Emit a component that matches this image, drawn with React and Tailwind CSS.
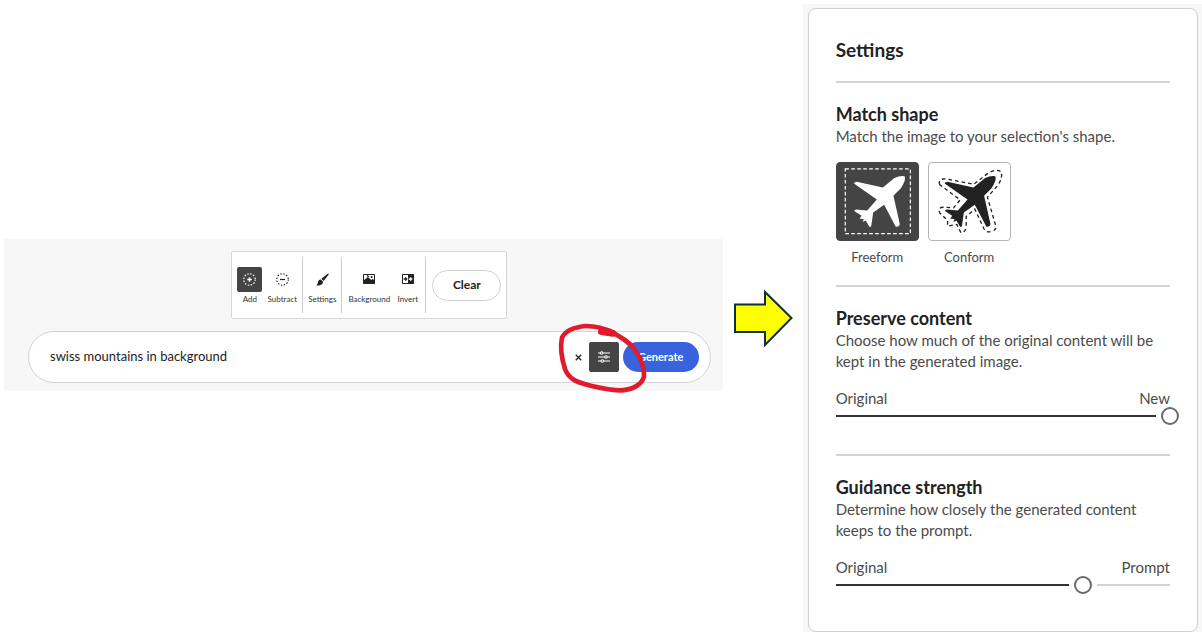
import React, { useState } from 'react';

const PLANE =
  'M88 101 Q90 95 100 96 L175 113 L210 84 Q228 76 241 79 Q245 92 230 114 L207 138 L226 222 Q226 232 214 231 L179 165 L146 188 L140 230 L135 232 L124 213 L114 216 L118 208 L105 207 L111 198 L90 184 Q88 179 96 179 L128 182 L157 149 Z';

const PLANE_OUTLINE =
  'M344 104 Q338 86 362 87 L447 103 L492 68 Q516 56 530 66 Q534 86 518 108 L488 142 L513 228 Q516 242 499 245 Q484 250 478 238 L450 178 L424 200 L424 230 Q422 248 408 249 L396 224 L368 229 L368 212 L345 190 Q338 176 352 172 L386 174 L406 150 Z';

function AddIcon() {
  return (
    <svg className="w-[13px] h-[13px]" viewBox="0 0 26 26" fill="none" stroke="currentColor">
      <circle cx="13" cy="13" r="11.5" strokeWidth="2.4" strokeDasharray="3 3.02" />
      <path d="M13 8.5v9M8.5 13h9" strokeWidth="2.8" />
    </svg>
  );
}

function SubtractIcon() {
  return (
    <svg className="w-[13px] h-[13px]" viewBox="0 0 26 26" fill="none" stroke="currentColor">
      <circle cx="13" cy="13" r="11.5" strokeWidth="2.2" strokeDasharray="3 3.02" />
      <path d="M8 13h10" strokeWidth="2.4" />
    </svg>
  );
}

function BrushIcon() {
  return (
    <svg className="w-[13px] h-[13px]" viewBox="0 0 39 39" fill="currentColor">
      <path d="M38 1.5 Q39 3 37 6 L23 24 L16 17.5 L34 3 Q37 .5 38 1.5Z" />
      <path d="M14.5 19.5 L21.5 26 Q21 34 12 37 Q6 38.5 1 37 Q5 34 5.5 29 Q7 20 14.5 19.5Z" />
    </svg>
  );
}

function BackgroundIcon() {
  return (
    <svg className="w-[12px] h-[12px]" viewBox="0 0 36 36">
      <rect x="0" y="3" width="36" height="30" rx="2" fill="#222" />
      <path d="M3 6h30v15l-4-4-4 4-10-9-12 9z" fill="#fff" />
      <circle cx="26" cy="12" r="3.2" fill="#222" />
      <path d="M12 6l7 4-3 3-5-3z" fill="#222" />
    </svg>
  );
}

function InvertIcon() {
  return (
    <svg className="w-[12px] h-[12px]" viewBox="0 0 36 36">
      <rect x="0" y="3" width="36" height="30" rx="2" fill="#222" />
      <path d="M3 6h15v24H3z" fill="#fff" />
      <path d="M5 18h11M11 13v10" stroke="#222" strokeWidth="4" />
      <path d="M20 18h11M26 13v10" stroke="#fff" strokeWidth="4" />
    </svg>
  );
}

function SlidersIcon() {
  return (
    <svg className="w-[12px] h-[12px]" viewBox="0 0 36 36" fill="none" stroke="#fff" strokeWidth="3.2">
      <path d="M0 6h7M15 6h21M0 18h20M28 18h8M0 30h9M17 30h19" />
      <circle cx="11" cy="6" r="3.9" />
      <circle cx="24" cy="18" r="3.9" />
      <circle cx="13" cy="30" r="3.9" />
    </svg>
  );
}

function ToolButton({ label, icon, active, className }) {
  return (
    <button type="button" className={`flex flex-col items-center ${className}`}>
      <span
        className={`flex h-[25px] w-[25px] items-center justify-center rounded-xs ${
          active ? 'bg-[#444] text-white' : 'text-[#222]'
        }`}
      >
        {icon}
      </span>
      <span className="mt-0.5 text-[8px] leading-[10px] text-[#333]">{label}</span>
    </button>
  );
}

function Toolbar() {
  return (
    <div className="flex h-[68px] rounded-xs border border-[#d8d8d8] bg-white p-[5px]">
      <div className="flex items-center gap-1 border-r border-[#ccc] pr-1">
        <ToolButton label="Add" icon={<AddIcon />} active className="w-[25px]" />
        <ToolButton label="Subtract" icon={<SubtractIcon />} className="w-8" />
      </div>
      <div className="flex items-center border-r border-[#ccc] px-1">
        <ToolButton label="Settings" icon={<BrushIcon />} className="w-[30px]" />
      </div>
      <div className="flex items-center gap-1.5 border-r border-[#ccc] px-1.5">
        <ToolButton label="Background" icon={<BackgroundIcon />} className="w-[42px]" />
        <ToolButton label="Invert" icon={<InvertIcon />} className="w-[23px]" />
      </div>
      <button
        type="button"
        className="ml-1.5 h-[31px] w-[69px] self-center rounded-full border border-[#d0d0d0] text-[12px] font-bold text-[#222]"
      >
        Clear
      </button>
    </div>
  );
}

function PromptBar() {
  const [prompt, setPrompt] = useState('swiss mountains in background');

  return (
    <form
      className="relative flex h-[52px] w-full items-center rounded-full border border-[#d4d4d4] bg-white pr-[11px] pl-[21px]"
      onSubmit={(e) => e.preventDefault()}
    >
      <input
        type="text"
        aria-label="Prompt"
        value={prompt}
        onChange={(e) => setPrompt(e.target.value)}
        className="min-w-0 flex-1 text-[13px] text-[#222] outline-none"
      />
      <button
        type="button"
        aria-label="Clear prompt"
        onClick={() => setPrompt('')}
        className="flex h-5 w-5 items-center justify-center"
      >
        <svg className="h-[7px] w-[7px]" viewBox="0 0 14 14" stroke="#222" strokeWidth="2.6">
          <path d="M1.5 1.5l11 11M12.5 1.5l-11 11" />
        </svg>
      </button>
      <button
        type="button"
        aria-label="Prompt settings"
        className="mr-1 flex h-[30px] w-[30px] items-center justify-center rounded-xs bg-[#444]"
      >
        <SlidersIcon />
      </button>
      <button
        type="submit"
        className="h-[30px] w-[76px] rounded-full bg-[#3863dd] text-[11px] font-bold text-white"
      >
        Generate
      </button>

      {/* hand-drawn marker circle */}
      <svg
        className="pointer-events-none absolute -top-[17px] -right-[10px] h-20 w-[175px]"
        viewBox="0 0 525 240"
        fill="none"
        stroke="#e01b2c"
        strokeLinecap="round"
        strokeLinejoin="round"
      >
        <path
          d="M206 53 C185 43 155 32 120 33 C85 37 60 50 51 68 C45 95 50 130 60 162 C72 195 100 203 140 213 C175 221 200 226 228 226 C262 224 290 210 297 185 C299 160 288 130 268 102 C250 78 225 65 196 48"
          strokeWidth="14"
        />
        <path d="M169 50 L204 55" strokeWidth="20" />
      </svg>
    </form>
  );
}

function ShapeOption({ label, value, selected, onChange, children }) {
  return (
    <label className="flex cursor-pointer flex-col items-center">
      <input
        type="radio"
        name="shape"
        value={value}
        checked={selected}
        onChange={() => onChange(value)}
        className="sr-only"
      />
      {children}
      <span className="mt-1.5 text-[13px] leading-5 text-[#4b4b4b]">{label}</span>
    </label>
  );
}

function SliderField({ label, left, right, initial }) {
  const [value, setValue] = useState(initial);

  return (
    <div className="mt-4">
      <div className="relative z-10 flex justify-between text-[15px] leading-5 text-[#4b4b4b]">
        <span>{left}</span>
        <span>{right}</span>
      </div>
      <div className="relative flex h-4 items-center">
        <div className="h-0.5 w-full bg-[#d4d4d4]">
          <div className="h-full bg-[#333]" style={{ width: `${value}%` }}></div>
        </div>
        <input
          type="range"
          min="0"
          max="100"
          aria-label={label}
          value={value}
          onChange={(e) => setValue(Number(e.target.value))}
          className="absolute -inset-x-[9px] h-4 appearance-none bg-transparent [&::-webkit-slider-thumb]:h-[18px] [&::-webkit-slider-thumb]:w-[18px] [&::-webkit-slider-thumb]:appearance-none [&::-webkit-slider-thumb]:rounded-full [&::-webkit-slider-thumb]:border-2 [&::-webkit-slider-thumb]:border-[#6a6a6a] [&::-webkit-slider-thumb]:bg-white [&::-webkit-slider-thumb]:shadow-[0_0_0_5px_#fff]"
        />
      </div>
    </div>
  );
}

function SectionText({ title, children }) {
  return (
    <>
      <h3 className="text-[18px] leading-6 font-bold text-[#222]">{title}</h3>
      <p className="text-[15px] leading-[21px] text-[#4b4b4b]">{children}</p>
    </>
  );
}

function SettingsPanel() {
  const [shape, setShape] = useState('freeform');
  const freeform = shape === 'freeform';
  const selectedTile = 'border-[#444] bg-[#444] text-white';
  const plainTile = 'border-[#b4b4b4] bg-white text-[#222]';

  return (
    <aside className="w-1/3 shrink-0 bg-[#f7f7f7] pt-1 pr-1 pl-[5px]">
      <div className="rounded-lg border border-[#d0d0d0] bg-white px-[27px] pt-[27px] pb-[38px]">
        <h2 className="text-[19px] leading-7 font-bold text-[#222]">Settings</h2>

        <hr className="mt-[17px] mb-[19px] border-t-2 border-[#d4d4d4]" />

        <section>
          <SectionText title="Match shape">Match the image to your selection's shape.</SectionText>
          <div className="mt-[15px] flex gap-[9px]">
            <ShapeOption label="Freeform" value="freeform" selected={freeform} onChange={setShape}>
              <span className={`h-[79px] w-[83px] overflow-hidden rounded-sm border ${freeform ? selectedTile : plainTile}`}>
                <svg className="h-full w-full" viewBox="37 40 244 230">
                  <rect x="62" y="57" width="196" height="195" fill="none" stroke="currentColor" strokeWidth="3.6" strokeDasharray="11 7" />
                  <path d={PLANE} fill="currentColor" />
                </svg>
              </span>
            </ShapeOption>
            <ShapeOption label="Conform" value="conform" selected={!freeform} onChange={setShape}>
              <span className={`h-[79px] w-[83px] overflow-hidden rounded-sm border ${freeform ? plainTile : selectedTile}`}>
                <svg className="h-full w-full" viewBox="312 40 244 230">
                  <path d={PLANE_OUTLINE} fill="none" stroke="currentColor" strokeWidth="4" strokeDasharray="11 9" />
                  <path d={PLANE} transform="translate(271 0)" fill="currentColor" />
                </svg>
              </span>
            </ShapeOption>
          </div>
        </section>

        <hr className="mt-[18px] mb-[19px] border-t-2 border-[#d4d4d4]" />

        <section>
          <SectionText title="Preserve content">
            Choose how much of the original content will be kept in the generated image.
          </SectionText>
          <SliderField label="Preserve content" left="Original" right="New" initial={100} />
        </section>

        <hr className="mt-[30px] mb-[19px] border-t-2 border-[#d4d4d4]" />

        <section>
          <SectionText title="Guidance strength">
            Determine how closely the generated content keeps to the prompt.
          </SectionText>
          <SliderField label="Guidance strength" left="Original" right="Prompt" initial={74} />
        </section>
      </div>
    </aside>
  );
}

export default function App() {
  return (
    <div className="flex min-h-screen items-center gap-2.5 bg-white pt-1 pb-1.5 pl-1 font-['Lato',sans-serif]">
      <main className="mb-1.5 flex flex-1 flex-col items-center gap-3 bg-[#f7f7f7] pt-3 pr-3 pb-2 pl-6">
        <Toolbar />
        <PromptBar />
      </main>

      <svg className="h-[58px] w-[60px] shrink-0" viewBox="0 0 60 58">
        <path d="M2 15.5H32V3L58.5 29L32 56V43H2Z" fill="#ffff00" stroke="#0d2f3f" strokeWidth="2" />
      </svg>

      <SettingsPanel />
    </div>
  );
}
